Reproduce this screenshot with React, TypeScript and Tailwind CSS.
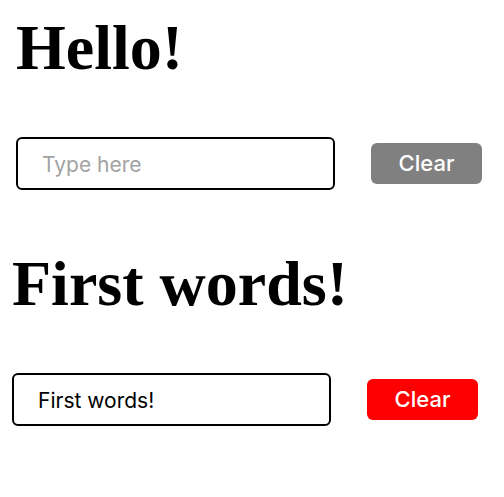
import { useState } from 'react';

interface GreetingProps {
  initial: string;
  placeholder: string;
  offsetClass: string;
  topClass: string;
}

function Greeting({ initial, placeholder, offsetClass, topClass }: GreetingProps) {
  const [text, setText] = useState(initial);
  const hasText = text.length > 0;

  return (
    <div className={`${offsetClass} ${topClass}`}>
      <h1 className="text-[64px] leading-[74px] font-bold text-black" style={{ fontFamily: '"Liberation Serif", "Times New Roman", serif' }}>
        {hasText ? text : 'Hello!'}
      </h1>
      <div className="mt-[52px] flex items-center gap-[36px]">
        <input
          className="w-[319px] h-[53px] border-2 border-black rounded-[6px] pl-[24px] pt-[2px] text-[21px] text-black placeholder:text-[#a3a3a3] outline-none"
          style={{ fontFamily: 'Inter, "Liberation Sans", sans-serif' }}
          placeholder={placeholder}
          value={text}
          onChange={e => setText(e.target.value)}
        />
        <button
          className={`w-[111px] h-[41px] rounded-[6px] text-white text-[22px] font-medium ${hasText ? 'bg-[#ff0000]' : 'bg-[#808080]'}`}
          style={{ fontFamily: 'Inter, "Liberation Sans", sans-serif' }}
          onClick={() => setText('')}
        >
          Clear
        </button>
      </div>
    </div>
  );
}

export default function App() {
  return (
    <div className="bg-white w-[504px] h-[497px]">
      <Greeting initial="" placeholder="Type here" offsetClass="ml-4" topClass="pt-[11px]" />
      <Greeting initial="First words!" placeholder="Type here" offsetClass="ml-3" topClass="pt-[57px]" />
    </div>
  );
}
